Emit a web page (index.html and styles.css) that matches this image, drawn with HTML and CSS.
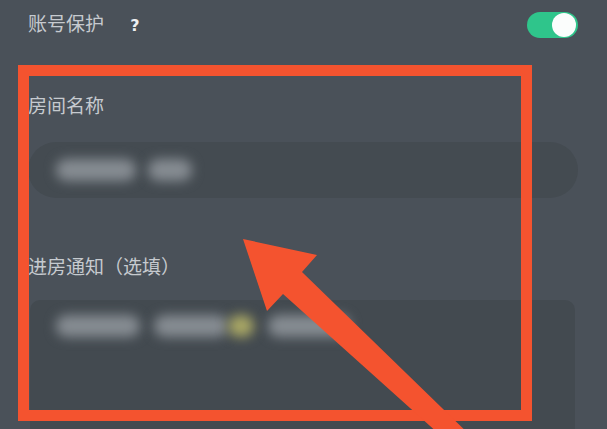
FILE: index.html
```html
<!DOCTYPE html>
<html lang="zh">
<head>
  <meta charset="UTF-8">
  <meta name="viewport" content="width=device-width, initial-scale=1.0">
  <title>房间设置</title>
  <link rel="stylesheet" href="styles.css">
</head>
<body>
  <div class="page">
    <!-- Account protection row -->
    <div class="setting-row">
      <div class="setting-label">账号保护 <span class="help">?</span></div>
      <div class="toggle on"><span class="knob"></span></div>
    </div>

    <!-- Room name -->
    <div class="field field-name">
      <div class="field-label">房间名称</div>
      <div class="input-pill">
        <span class="blur-text w80"></span>
        <span class="blur-text w44"></span>
      </div>
    </div>

    <!-- Entry notice -->
    <div class="field field-notice">
      <div class="field-label">进房通知（选填）</div>
      <div class="textarea-box">
        <span class="blur-text w84"></span>
        <span class="blur-text w74"></span>
        <span class="blur-text yellow"></span>
        <span class="blur-text w82"></span>
      </div>
    </div>

    <!-- Annotation: red box + arrow -->
    <div class="mark-box"></div>
    <svg class="mark-arrow" width="607" height="429" viewBox="0 0 607 429">
      <polygon points="243,239 317,255 302,272 476,441 449,443 283,294 267,311" fill="#f4532f"/>
    </svg>
  </div>
</body>
</html>
```

FILE: styles.css
```css
/* Global */
body {
  margin: 0;
  font-family: 'Noto Sans CJK SC', 'Noto Sans', sans-serif;
  background-color: #4a5159;
}

.page {
  position: relative;
  width: 607px;
  height: 429px;
  padding: 0 29px 0 28px;
  box-sizing: border-box;
  background-color: #4a5159;
  overflow: hidden;
}

/* Top setting row */
.setting-row {
  height: 49px;
  display: flex;
  justify-content: space-between;
  align-items: center;
}

.setting-label {
  font-size: 19px;
  line-height: 26px;
  color: #c6cacf;
}

.help {
  margin-left: 22px;
  font-family: 'DejaVu Sans', sans-serif;
  font-size: 16px;
  font-weight: bold;
  color: #eef0f2;
}

.toggle {
  width: 51px;
  height: 26px;
  border-radius: 13px;
  background-color: #2fc58b;
  position: relative;
}

.toggle .knob {
  position: absolute;
  top: 1px;
  right: 2px;
  width: 24px;
  height: 24px;
  border-radius: 50%;
  background-color: #fbfdfc;
}

/* Fields */
.field-label {
  font-size: 19px;
  line-height: 26px;
  color: #c6cacf;
}

.field-name {
  margin-top: 43px;
}

.field-notice {
  margin-top: 55px;
}

.input-pill {
  margin-top: 24px;
  height: 56px;
  width: 550px;
  border-radius: 28px;
  background-color: #444b51;
  display: flex;
  align-items: center;
  gap: 12px;
  padding-left: 28px;
  box-sizing: border-box;
}

.textarea-box {
  margin: 21px 0 0 2px;
  height: 160px;
  width: 545px;
  border-radius: 10px;
  background-color: #434a50;
  display: flex;
  align-items: flex-start;
  gap: 14px;
  padding: 15px 0 0 26px;
  box-sizing: border-box;
}

/* Blurred placeholder content */
.blur-text {
  display: inline-block;
  height: 22px;
  border-radius: 11px;
  background-color: #868c92;
  filter: blur(6px);
}

.w44 { width: 44px; }
.w74 { width: 74px; }
.w80 { width: 80px; }
.w82 { width: 82px; }
.w84 { width: 84px; }

.blur-text.yellow {
  width: 26px;
  margin-left: -14px;
  background-color: #a9a765;
}

/* Annotation overlay */
.mark-box {
  position: absolute;
  left: 18px;
  top: 65px;
  width: 514px;
  height: 356px;
  border: 11px solid #f4532f;
  box-sizing: border-box;
}

.mark-arrow {
  position: absolute;
  left: 0;
  top: 0;
}
```
